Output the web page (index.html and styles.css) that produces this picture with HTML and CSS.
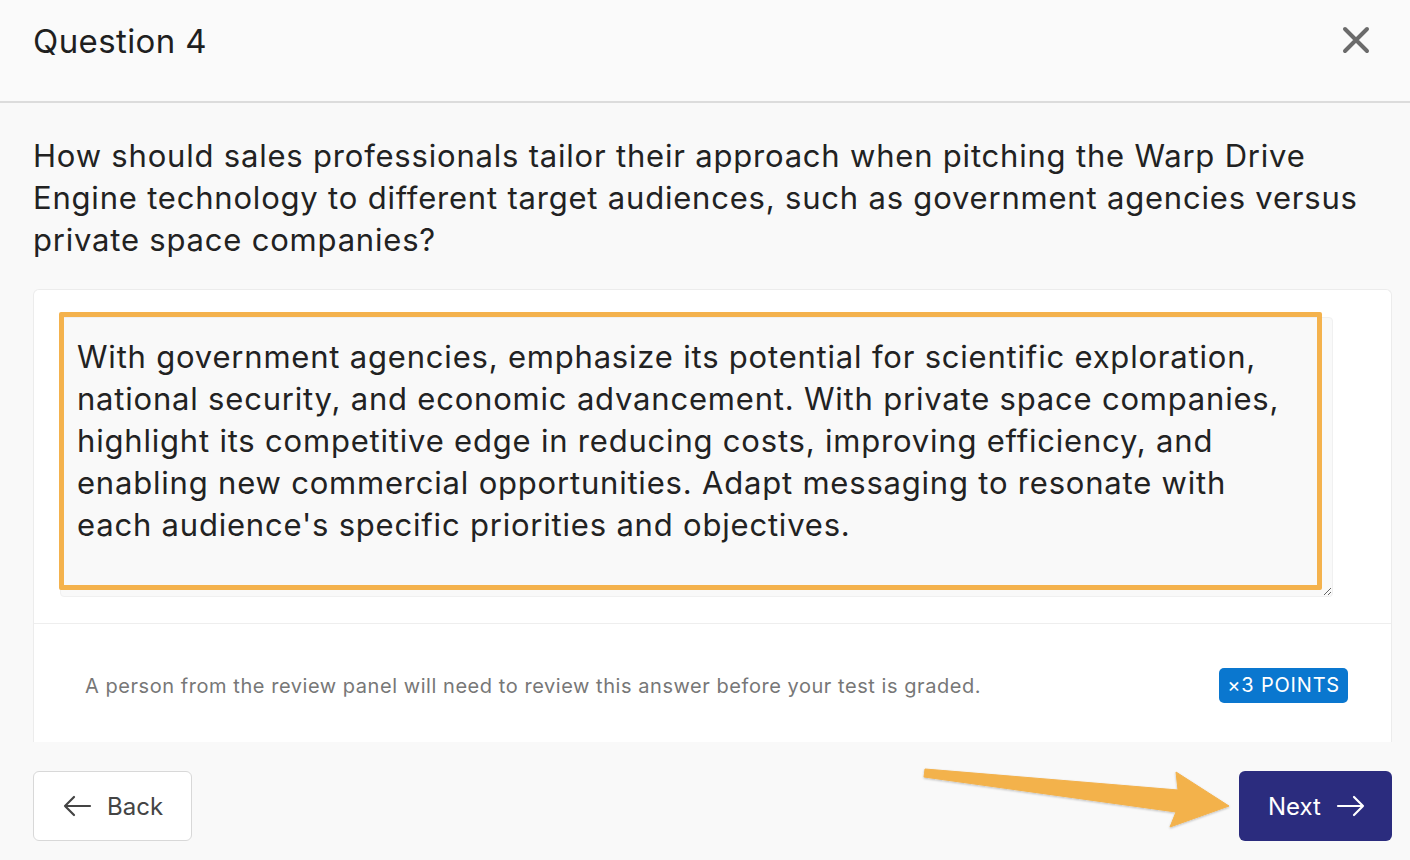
FILE: index.html
```html
<!DOCTYPE html>
<html>
	<head>
		<meta charset="UTF-8">
		<title>Question 4</title>
		<link rel="stylesheet" href="styles.css">
	</head>

	<body>
		<div class="header">
			<div class="title">Question 4</div>
			<svg class="close" width="28" height="28" viewBox="0 0 28 28">
				<path d="M3 3L25 25M25 3L3 25" stroke="#6b6b6b" stroke-width="4" stroke-linecap="round" fill="none"/>
			</svg>
		</div>

		<div class="main">
			<div class="question">
				How should sales professionals tailor their approach when pitching the Warp Drive Engine technology to different target audiences, such as government agencies versus private space companies?
			</div>

			<div class="card">
				<div class="answer-wrap">
					<textarea class="answer">With government agencies, emphasize its potential for scientific exploration, national security, and economic advancement. With private space companies, highlight its competitive edge in reducing costs, improving efficiency, and enabling new commercial opportunities. Adapt messaging to resonate with each audience's specific priorities and objectives.</textarea>
					<div class="highlight"></div>
				</div>
				<div class="card-foot">
					<span class="note">A person from the review panel will need to review this answer before your test is graded.</span>
					<span class="badge">×3 POINTS</span>
				</div>
			</div>

			<div class="actions">
				<div class="btn back">
					<svg width="30" height="24" viewBox="0 0 30 24">
						<path d="M28 12H3M12 3L3 12L12 21" stroke="#444" stroke-width="2.2" fill="none" stroke-linecap="round" stroke-linejoin="round"/>
					</svg>
					<span>Back</span>
				</div>
				<div class="btn next">
					<span>Next</span>
					<svg width="30" height="24" viewBox="0 0 30 24">
						<path d="M2 12H27M18 3L27 12L18 21" stroke="#fff" stroke-width="2.2" fill="none" stroke-linecap="round" stroke-linejoin="round"/>
					</svg>
				</div>
			</div>
		</div>

		<svg class="pointer" width="320" height="75" viewBox="0 0 320 75">
			<defs>
				<filter id="shade" x="-10%" y="-20%" width="120%" height="140%">
					<feDropShadow dx="0" dy="1" stdDeviation="1" flood-color="#000" flood-opacity="0.25"/>
				</filter>
			</defs>
			<polygon points="10,9 263,30 261,12 314,46 255,67 261,52 9,17" fill="#f3b24c" stroke="#f3b24c" stroke-width="1" stroke-linejoin="round" filter="url(#shade)"/>
		</svg>
	</body>
</html>
```

FILE: styles.css
```css
body {
	margin: 0;
	background: #f9f9f9;
	font-family: Inter, "Liberation Sans", sans-serif;
	color: #222;
}

.header {
	height: 103px;
	box-sizing: border-box;
	padding: 21px 40px 0 33px;
	display: flex;
	justify-content: space-between;
	align-items: flex-start;
	background: #fafafa;
	border-bottom: 2px solid #dcdcdc;
}

.title {
	font-size: 33px;
	line-height: 40px;
	letter-spacing: 0.4px;
	color: #1f1f1f;
}

.close {
	margin-top: 5px;
}

.main {
	padding: 0 18px 0 33px;
}

.question {
	margin-top: 32px;
	font-size: 31px;
	line-height: 42px;
	letter-spacing: 0.8px;
	color: #222;
}

.card {
	margin-top: 28px;
	background: #fff;
	border: 1px solid #ececec;
	border-bottom: none;
	border-radius: 6px 6px 0 0;
}

.answer-wrap {
	position: relative;
	padding: 27px 0 26px 26px;
	border-bottom: 1px solid #eeeeee;
}

.answer {
	display: block;
	width: 1273px;
	height: 280px;
	box-sizing: border-box;
	margin: 0;
	padding: 18px 40px 16px 16px;
	border: 1px solid #f0f0f0;
	border-radius: 4px;
	background: #f9f9f9;
	font-family: Inter, "Liberation Sans", sans-serif;
	font-size: 31px;
	line-height: 42px;
	letter-spacing: 0.8px;
	color: #222;
	resize: vertical;
	outline: none;
	overflow: hidden;
}

.highlight {
	position: absolute;
	left: 25px;
	top: 22px;
	width: 1263px;
	height: 278px;
	box-sizing: border-box;
	border: 5px solid #f4b24d;
	border-radius: 2px;
}

.card-foot {
	height: 118px;
	box-sizing: border-box;
	display: flex;
	align-items: center;
	justify-content: space-between;
	padding: 5px 43px 0 51px;
}

.note {
	font-size: 20px;
	letter-spacing: 0.55px;
	color: #777;
}

.badge {
	background: #0a77cf;
	color: #fff;
	font-size: 20px;
	line-height: 35px;
	padding: 0 8px;
	border-radius: 5px;
	letter-spacing: 0.8px;
}

.actions {
	margin-top: 29px;
	display: flex;
	justify-content: space-between;
}

.btn {
	height: 70px;
	box-sizing: border-box;
	display: flex;
	align-items: center;
	gap: 15px;
	font-size: 24px;
	border-radius: 6px;
}

.back {
	width: 159px;
	padding-left: 28px;
	background: #fff;
	border: 1px solid #d8d8d8;
	color: #444;
}

.next {
	width: 153px;
	padding-left: 29px;
	background: #2b2c7e;
	color: #fff;
}

.pointer {
	position: absolute;
	left: 915px;
	top: 760px;
}
```
